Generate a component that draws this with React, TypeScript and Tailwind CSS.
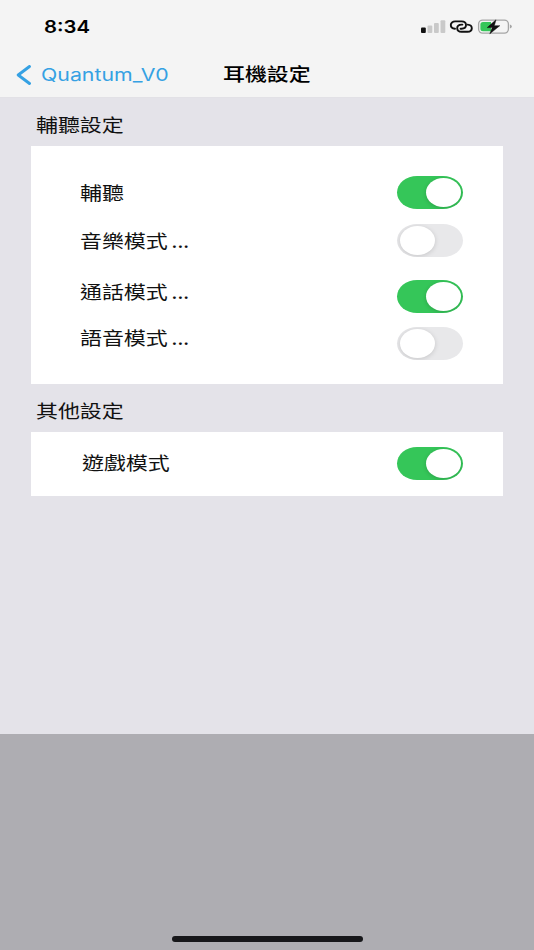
import { useState } from 'react';
import clsx from 'clsx';

interface SwitchProps {
  label: string;
  checked: boolean;
  onChange: () => void;
}

function Switch({ label, checked, onChange }: SwitchProps) {
  return (
    <button
      role="switch"
      aria-checked={checked}
      aria-label={label}
      onClick={onChange}
      className={clsx(
        'flex h-[33px] w-[66px] shrink-0 items-center overflow-hidden rounded-[20px/16.5px] px-[2.5px]',
        checked ? 'justify-end bg-[#35c659]' : 'justify-start bg-[#e8e8ea]'
      )}
    >
      <span
        className={clsx(
          'h-[29px] w-[35px] rounded-[50%] bg-white',
          checked ? 'shadow-[0_1px_4px_rgba(0,0,0,0.18)]' : 'shadow-[0_1px_5px_rgba(0,0,0,0.15)]'
        )}
      />
    </button>
  );
}

const rows = [
  { id: 'assist', label: '輔聽', row: '', text: 'mt-[2px]' },
  { id: 'music', label: '音樂模式', suffix: true, row: 'mt-[15px]', text: 'mt-[2px]' },
  { id: 'call', label: '通話模式', suffix: true, row: 'mt-[23px]', text: 'mb-[9px]' },
  { id: 'voice', label: '語音模式', suffix: true, row: 'mt-[14px]', text: 'mb-[10px]' },
];

export default function App() {
  const [enabled, setEnabled] = useState<Record<string, boolean>>({
    assist: true,
    music: false,
    call: true,
    voice: false,
    game: true,
  });

  const toggle = (id: string) => setEnabled(prev => ({ ...prev, [id]: !prev[id] }));

  return (
    <div className="flex h-[950px] w-[534px] flex-col overflow-hidden bg-[#e4e3e9] font-['Inter','Noto_Sans_CJK_TC',sans-serif] text-[18.3px] text-[#111]">
      <header className="h-[98px] shrink-0 border-b border-[#e2e1e6] bg-[#f4f4f4]">
        {/* 狀態列 */}
        <div className="flex h-[52px] items-center justify-between pl-[44px] pr-[21px]">
          <span className="mt-px origin-left scale-x-[1.16] text-[17.5px] font-semibold leading-none text-black">8:34</span>
          <svg width="92" height="20" viewBox="0 0 92 20" fill="none">
            <rect x="0" y="11.5" width="4.8" height="5.5" rx="1" fill="#111" />
            <rect x="6.5" y="9.5" width="4.8" height="7.5" rx="1" fill="#c9c9c9" />
            <rect x="13" y="7" width="4.8" height="10" rx="1" fill="#c9c9c9" />
            <rect x="19.5" y="4.2" width="4.8" height="12.8" rx="1" fill="#c9c9c9" />
            <g stroke="#111" strokeWidth="1.9" strokeLinecap="round">
              <path d="M34 12.7C31.3 12.5 29.8 10.9 29.8 9C29.8 6.9 31.6 5.4 34.2 5.4H40.6C43.2 5.4 45 6.9 45 9C45 11.1 43.2 12.7 40.6 12.7H39.6" />
              <path d="M46.6 8.6C49.3 8.8 50.8 10.3 50.8 12.2C50.8 14.3 49 15.7 46.4 15.7H40.6C38 15.7 36.2 14.3 36.2 12.2C36.2 10.1 38 8.6 40.6 8.6H41.4" />
            </g>
            <rect x="57.6" y="4.1" width="29.8" height="13" rx="4" stroke="#a5a5a5" strokeWidth="1.3" />
            <path d="M62 5.9H70V15.3H62Q59.4 15.3 59.4 12.8V8.4Q59.4 5.9 62 5.9Z" fill="#35c659" />
            <path d="M88.9 8.6V12.6Q90.8 12.2 90.8 10.6Q90.8 9 88.9 8.6Z" fill="#a5a5a5" />
            <path d="M75 3.8L66.2 11.6H71.3L68.8 17.8L78.8 9.7H73.3Z" fill="#111" stroke="#111" strokeWidth="0.5" strokeLinejoin="round" />
          </svg>
        </div>
        {/* 導覽列 */}
        <nav className="flex h-[45px] items-center">
          <button className="flex w-[223px] items-center pl-[16px] text-[#35a1e3]">
            <svg width="16" height="20" viewBox="0 0 16 20" fill="none">
              <path d="M13.5 1.5L2.2 10L13.5 18.5" stroke="currentColor" strokeWidth="2.9" strokeLinecap="round" strokeLinejoin="round" />
            </svg>
            <span className="ml-[9px] origin-left scale-x-[1.217] text-[17.5px] leading-none">Quantum_V0</span>
          </button>
          <h1 className="origin-left scale-x-[1.2] font-medium leading-none text-black">耳機設定</h1>
        </nav>
      </header>

      <main className="h-[636px] shrink-0 px-[31px]">
        <h2 className="flex h-[48px] items-center pl-[5px] pt-[6px] leading-none">
          <span className="origin-left scale-x-[1.2]">輔聽設定</span>
        </h2>
        <section className="h-[238px] bg-white pl-[49px] pr-[40px] pt-[30px]">
          {rows.map(item => (
            <div key={item.id} className={clsx('flex h-[33px] items-center justify-between', item.row)}>
              <span className={clsx('origin-left scale-x-[1.2] leading-none', item.text)}>
                {item.label}
                {item.suffix && <span className="ml-[3px] tracking-[-0.4px]">...</span>}
              </span>
              <Switch label={item.label} checked={enabled[item.id]} onChange={() => toggle(item.id)} />
            </div>
          ))}
        </section>

        <h2 className="flex h-[48px] items-center pl-[5px] pt-[6px] leading-none">
          <span className="origin-left scale-x-[1.2]">其他設定</span>
        </h2>
        <section className="flex h-[64px] items-center justify-between bg-white pb-[2px] pl-[51px] pr-[40px]">
          <span className="origin-left scale-x-[1.2] leading-none">遊戲模式</span>
          <Switch label="遊戲模式" checked={enabled.game} onChange={() => toggle('game')} />
        </section>
      </main>

      <footer className="flex flex-1 items-end justify-center bg-[#aeadb2] pb-[8px]">
        <div className="h-[6px] w-[191px] rounded-full bg-[#17171a]" />
      </footer>
    </div>
  );
}
